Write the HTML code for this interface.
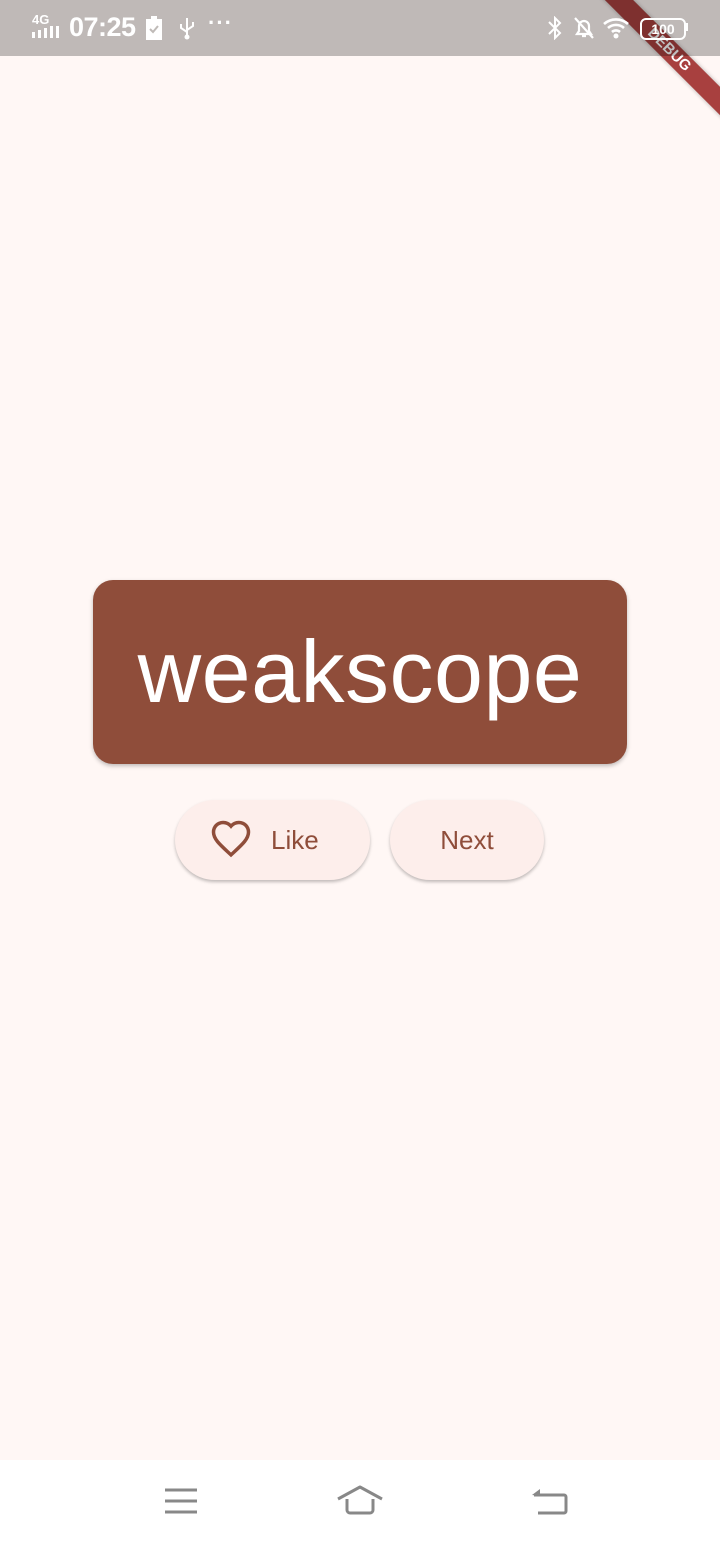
<!DOCTYPE html>
<html><head><meta charset="utf-8"><style>
html,body{margin:0;padding:0}
body{width:720px;height:1544px;position:relative;overflow:hidden;background:#fff7f5;font-family:"Liberation Sans",Roboto,sans-serif}
.status{position:absolute;left:0;top:0;width:720px;height:56px;background:rgba(0,0,0,0.25);color:#fff;z-index:2}
.time{position:absolute;left:69px;top:12px;font-size:27px;font-weight:bold;letter-spacing:-0.5px}
.card{position:absolute;left:93px;top:580px;width:534px;height:184px;background:#8f4d3a;border-radius:20px;box-shadow:0 2px 4px rgba(0,0,0,.25);color:#fff;font-size:88px;text-align:center;line-height:184px;letter-spacing:0.5px}
.btn{position:absolute;top:800px;height:80px;border-radius:40px;background:#fdeeeb;box-shadow:0 2px 3px rgba(0,0,0,.25);color:#8f4d3a;font-size:26px;line-height:80px}
.nav{position:absolute;left:0;top:1460px;width:720px;height:84px;background:#fff}
.ribbon{position:absolute;left:569px;top:40px;width:200px;height:20px;background:#a8403f;transform:rotate(45deg);color:#fff;font-size:15px;font-weight:bold;text-align:center;line-height:20px;box-shadow:0 0 4px rgba(0,0,0,.3);z-index:1}
</style></head><body>
<div class="ribbon">DEBUG</div>
<div class="status">
 <div style="position:absolute;left:32px;top:12px;font-size:13px;font-weight:bold">4G</div>
 <svg style="position:absolute;left:32px;top:26px" width="30" height="12"><rect x="0" y="6" width="3" height="6" fill="#fff"/><rect x="6" y="4" width="3" height="8" fill="#fff"/><rect x="12" y="2" width="3" height="10" fill="#fff"/><rect x="18" y="0" width="3" height="12" fill="#fff"/><rect x="24" y="0" width="3" height="12" fill="#fff"/></svg>
 <div class="time">07:25</div>
 <svg style="position:absolute;left:146px;top:16px" width="18" height="24"><rect x="0" y="3" width="16" height="21" fill="#fff"/><rect x="5" y="0" width="6" height="4" fill="#fff"/><path d="M4 13l3 3 5-6" stroke="#bfbab7" stroke-width="2" fill="none"/></svg>
 <svg style="position:absolute;left:178px;top:16px" width="18" height="24"><path d="M9 2v20M3 8v4l6 4M15 6v4l-6 4" stroke="#fff" stroke-width="2" fill="none"/><circle cx="9" cy="21" r="2.5" fill="#fff"/></svg>
 <div style="position:absolute;left:208px;top:10px;font-size:22px;font-weight:bold;letter-spacing:1px">···</div>
 <svg style="position:absolute;left:546px;top:16px" width="18" height="24"><path d="M3 6l11 11-5 5V2l5 5L3 18" stroke="#fff" stroke-width="2" fill="none"/></svg>
 <svg style="position:absolute;left:572px;top:16px" width="24" height="24"><path d="M5 18h14l-2-3v-5a5 5 0 0 0-10 0v5zM10 20h4M3 2l18 20" stroke="#fff" stroke-width="2.2" fill="none"/></svg>
 <svg style="position:absolute;left:602px;top:16px" width="30" height="24"><path d="M2 8a18 18 0 0 1 24 0M6 12a12 12 0 0 1 16 0M10 16a6 6 0 0 1 8 0" stroke="#fff" stroke-width="2.6" fill="none"/><circle cx="14" cy="20" r="2.5" fill="#fff"/></svg>
 <div style="position:absolute;left:640px;top:18px;width:42px;height:18px;border:2px solid #fff;border-radius:6px;font-size:14px;font-weight:bold;text-align:center;line-height:18px">100</div>
 <div style="position:absolute;left:685px;top:23px;width:3px;height:8px;background:#fff"></div>
</div>
<div class="card">weakscope</div>
<div class="btn" style="left:175px;width:195px">
 <svg style="position:absolute;left:34px;top:19px" width="44" height="42" viewBox="0 0 24 24"><path d="M12 20.5l-1.4-1.3C5.4 14.4 2 11.3 2 7.5 2 4.4 4.4 2 7.5 2c1.7 0 3.4.8 4.5 2.1C13.1 2.8 14.8 2 16.5 2 19.6 2 22 4.4 22 7.5c0 3.8-3.4 6.9-8.6 11.7z" stroke="#8f4d3a" stroke-width="2" fill="none"/></svg>
 <span style="position:absolute;left:96px">Like</span>
</div>
<div class="btn" style="left:390px;width:154px;text-align:center">Next</div>
<div class="nav">
 <svg style="position:absolute;left:160px;top:24px" width="40" height="36"><path d="M5 6h32M5 17h32M5 28h32" stroke="#888" stroke-width="3" fill="none"/></svg>
 <svg style="position:absolute;left:334px;top:22px" width="52" height="38"><path d="M4 17L26 5l22 12" stroke="#888" stroke-width="3" fill="none" stroke-linejoin="round"/><path d="M13 17v11a3 3 0 0 0 3 3h20a3 3 0 0 0 3-3V17" stroke="#888" stroke-width="3" fill="none"/></svg>
 <svg style="position:absolute;left:528px;top:24px" width="44" height="36"><path d="M6 11h30a2 2 0 0 1 2 2v14a2 2 0 0 1-2 2H10" stroke="#888" stroke-width="3" fill="none"/><path d="M4 11l8-6v7z" fill="#888"/></svg>
</div>
</body></html>
